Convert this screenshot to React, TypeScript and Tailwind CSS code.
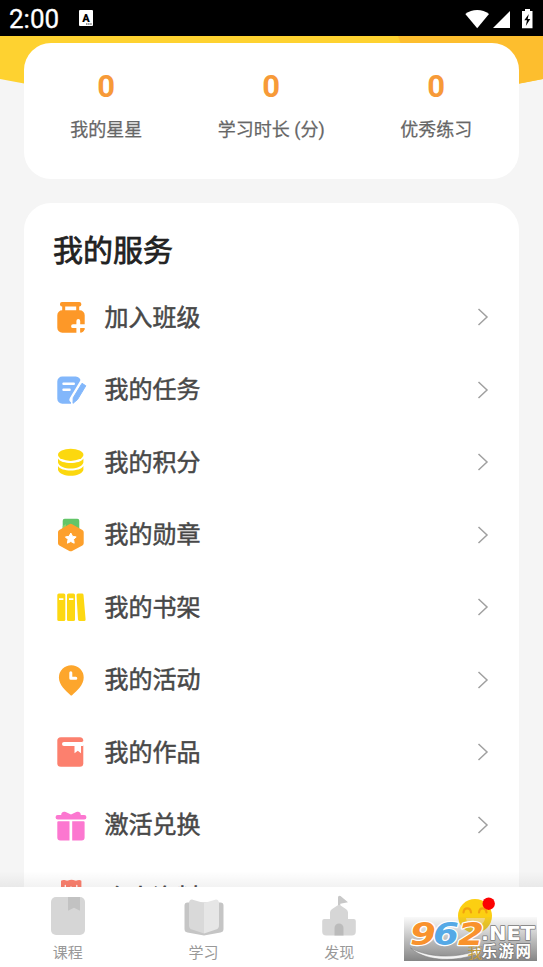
import type { ReactNode } from "react";

const stats = [
  { value: "0", label: "我的星星" },
  { value: "0", label: "学习时长 (分)" },
  { value: "0", label: "优秀练习" },
];

function Icon({ children }: { children: ReactNode }) {
  return (
    <svg viewBox="0 0 32 32" className="h-8 w-8 shrink-0 overflow-visible">
      {children}
    </svg>
  );
}

const services: { label: string; icon: ReactNode }[] = [
  {
    label: "加入班级",
    icon: (
      <Icon>
        <rect x="5" y="1" width="21.3" height="4.4" rx="2" fill="#fd9828" />
        <path d="M8.7 4v7M22.7 4v7" stroke="#fd9828" strokeWidth="3" />
        <path d="M7.3 9.3H24.7a5 5 0 0 1 5 5V26.7a5 5 0 0 1-5 5H7.3a5 5 0 0 1-5-5V14.3a5 5 0 0 1 5-5Z" fill="#fd9828" />
        <path d="M23.3 20V33M18 25.2H31" stroke="#fff" strokeWidth="3.8" strokeLinecap="round" />
        <path d="M25.6 27.4H29.7a5 5 0 0 1-4.1 4.2Z" fill="#fd9828" />
      </Icon>
    ),
  },
  {
    label: "我的任务",
    icon: (
      <Icon>
        <path d="M7.3 2.5H20.5a5 5 0 0 1 5.2 5.3L16 24.8V29.8H7.3a5 5 0 0 1-5-5V7.5a5 5 0 0 1 5-5Z" fill="#82b7fb" />
        <path d="M28.2 8.5 18 25.5" stroke="#fff" strokeWidth="7" strokeLinecap="round" />
        <path d="M27 9.3 30.8 11.8 22.5 25.6 18 29.3 18.2 23.8Z" fill="#82b7fb" stroke="#82b7fb" strokeLinejoin="round" />
        <path d="M8.5 9.8H18.8M8.5 15.8H14.6" stroke="#fff" strokeWidth="2.4" strokeLinecap="round" />
      </Icon>
    ),
  },
  {
    label: "我的积分",
    icon: (
      <Icon>
        <ellipse cx="15.7" cy="8.8" rx="12.7" ry="6.1" fill="#fcd80e" />
        <path d="M3 12.5C6 18.5 25.4 18.5 28.4 12.5V16.4C26 24.5 5.4 24.5 3 16.4Z" fill="#fcd80e" />
        <path d="M3 20C6 26 25.4 26 28.4 20V24C26 31.7 5.4 31.7 3 24Z" fill="#fcd80e" />
      </Icon>
    ),
  },
  {
    label: "我的勋章",
    icon: (
      <Icon>
        <path d="M9.7-.3H22.3a2 2 0 0 1 2 2V11H7.7V1.7a2 2 0 0 1 2-2Z" fill="#62c568" />
        <path d="M11 9V5L7.7 7V11Z" fill="#8bd36a" />
        <path d="M14.3 5.2a3 3 0 0 1 2.8 0L27.4 11a2.5 2.5 0 0 1 1.3 2.3V24.2a2.5 2.5 0 0 1-1.3 2.2L17.1 32a3 3 0 0 1-2.8 0L4.3 26.4A2.5 2.5 0 0 1 3 24.2V13.3A2.5 2.5 0 0 1 4.3 11Z" fill="#fda02c" />
        <path d="m15.8 14 1.7 3.3 3.7.6-2.6 2.6.6 3.7-3.4-1.7-3.4 1.7.6-3.7-2.6-2.6 3.7-.6Z" fill="#fff" stroke="#fff" strokeLinejoin="round" />
      </Icon>
    ),
  },
  {
    label: "我的书架",
    icon: (
      <Icon>
        <rect x="2.3" y="2.5" width="8" height="27.5" rx="1.5" fill="#fdd812" />
        <rect x="12" y="2.5" width="8" height="27.5" rx="1.5" fill="#fdd812" />
        <path d="M23 2.5H27a1.5 1.5 0 0 1 1.5 1.2L30.6 28.4A1.5 1.5 0 0 1 29.1 30H24.5A1.5 1.5 0 0 1 23 28.6L21.5 4A1.5 1.5 0 0 1 23 2.5Z" fill="#fdd812" />
        <path d="M4 8.2H8.4M14 8.2H18.4" stroke="#fff" strokeWidth="1.7" />
      </Icon>
    ),
  },
  {
    label: "我的活动",
    icon: (
      <Icon>
        <path d="M16.3 1.2A12.4 12.4 0 0 1 28.7 13.6C28.7 21 22 26.8 17.3 31a1.4 1.4 0 0 1-2 0C10.7 26.8 3.9 21 3.9 13.6A12.4 12.4 0 0 1 16.3 1.2Z" fill="#fda62c" />
        <path d="M15.8 8.7V14.2H20.8" fill="none" stroke="#fff" strokeWidth="3" strokeLinecap="round" strokeLinejoin="round" />
      </Icon>
    ),
  },
  {
    label: "我的作品",
    icon: (
      <Icon>
        <rect x="2.3" y="1.3" width="26" height="29.4" rx="3.5" fill="#fc806e" />
        <path d="M9 6H27a2 2 0 0 1 1.5 1V10H26V17.2L22.8 14.8 19.5 17.2V10H9a2 2 0 0 1 0-4Z" fill="#fff" />
        <path d="M28.3 5.2V9" stroke="#fff" strokeWidth="1.5" />
      </Icon>
    ),
  },
  {
    label: "激活兑换",
    icon: (
      <Icon>
        <path d="M2.8 6H6.2C6 3.5 8.3 1.8 10.7 3.1L16 5.5 21.3 3.1C23.7 1.8 26 3.5 25.8 6H29.2a2 2 0 0 1 0 4.5H2.8a2 2 0 0 1 0-4.5Z" fill="#fc77d0" />
        <path d="M3.3 12.2H14.5V31.5H5.3a3 3 0 0 1-3-3V13.2a1 1 0 0 1 1-1ZM17.2 12.2H28.6a1 1 0 0 1 1 1V28.5a3 3 0 0 1-3 3H17.2Z" fill="#fc77d0" />
      </Icon>
    ),
  },
  {
    label: "个人资料",
    icon: (
      <Icon>
        <path d="M6-.2C9-2 11 .3 13-.4 15-1.4 18-1.4 20-.4 22 .3 24-2 26.4-.2V25H6Z" fill="#fc806e" />
        <path d="M10.3 4.5V7M16 6V7M21.8 4.5V7" stroke="#fff" strokeWidth="1.3" strokeLinecap="round" />
      </Icon>
    ),
  },
];

const tabs: { label: string; icon: ReactNode; active?: boolean }[] = [
  {
    label: "课程",
    icon: (
      <>
        <rect x="3" y="3" width="34" height="38" rx="5" fill="#d6d6d6" />
        <path d="M20 3H32V16.8L26 13.8 20 16.8Z" fill="#c2c2c2" />
      </>
    ),
  },
  {
    label: "学习",
    icon: (
      <>
        <path d="M3.5 8.5H36.5a3 3 0 0 1 3 3V35a3.5 3.5 0 0 1-3 3.5L20 41.5 3.5 38.5a3.5 3.5 0 0 1-3-3.5V11.5a3 3 0 0 1 3-3Z" fill="#c5c5c5" />
        <path d="M8.7 5.7 20 9V39.6L8 35.5A4.5 4.5 0 0 1 5 31.2V9C5 7 6.7 5 8.7 5.7Z" fill="#d9d9d9" />
        <path d="M31.3 5.7 20 9V39.6L32 35.5A4.5 4.5 0 0 0 35 31.2V9C35 7 33.3 5 31.3 5.7Z" fill="#e6e6e6" />
      </>
    ),
  },
  {
    label: "发现",
    icon: (
      <>
        <path d="M19 13V3.5a1.7 1.7 0 0 1 2.5-1.5L29 8.2 21.3 9.8V13Z" fill="#c8c8c8" />
        <path d="M11 27V18.5a4 4 0 0 1 1.8-3.3L18 11.8a3.5 3.5 0 0 1 4 0L27.2 15.2a4 4 0 0 1 1.8 3.3V27Z" fill="#d6d6d6" />
        <path d="M5.2 25H34.8a2 2 0 0 1 2 2V37.5a4 4 0 0 1-4 4H7.2a4 4 0 0 1-4-4V27a2 2 0 0 1 2-2Z" fill="#d6d6d6" />
        <path d="M15.5 41.5V34a4.5 4.5 0 0 1 9 0V41.5Z" fill="#bbb" />
      </>
    ),
  },
  {
    label: "我",
    active: true,
    icon: (
      <>
        <circle cx="20" cy="22" r="17" fill="#fccf12" />
        <path d="M8.5 18.5C9 13 15.5 13 16 18.5M24 18.5C24.5 13 31 13 31.5 18.5" fill="none" stroke="#f1a10f" strokeWidth="2.2" strokeLinecap="round" />
        <path d="M11 24H30C29 35 12 35 11 24Z" fill="#fbdc7c" />
        <circle cx="33.7" cy="9.7" r="6.2" fill="#fc0202" />
      </>
    ),
  },
];

function StatusBar() {
  return (
    <header className="flex h-9 shrink-0 items-center bg-black pl-[9px] pr-1.5">
      <span className="pt-0.5 font-[Roboto] text-[26px] leading-[34px] text-white [-webkit-text-stroke:0.3px_#fff]">2:00</span>
      <svg viewBox="0 0 14 16" className="ml-5 h-4 w-3.5">
        <rect width="14" height="16" rx="1" fill="#fff" />
        <text x="7" y="11.5" textAnchor="middle" fontSize="11" fontWeight="900" fontFamily="Roboto">A</text>
        <path d="M7 14H13" stroke="#333" strokeDasharray="1.5 .6" />
      </svg>
      <svg viewBox="465 7 72 21" className="ml-auto h-[21px] w-[72px]" fill="#fff">
        <path d="M465.3 13C472 7.7 482.5 7.7 489 13L477.2 27.3Z" />
        <path d="M510 10V27H493Z" />
        <path d="M525 8H530V10H532.5V27.3H522V10H525Z" />
        <path d="M528.8 13 524.3 19.3H527L525.8 25 530.3 18H527.7Z" fill="#000" />
      </svg>
    </header>
  );
}

function Watermark() {
  return (
    <svg viewBox="404 917 133 44" className="absolute left-[404px] top-[917px] h-11 w-[133px]">
      <defs>
        <linearGradient id="shade" x1="0" y1="0" x2="0" y2="1">
          <stop offset="0" stopColor="#888" stopOpacity="0.05" />
          <stop offset=".5" stopColor="#808080" stopOpacity=".5" />
          <stop offset="1" stopColor="#747474" stopOpacity=".88" />
        </linearGradient>
      </defs>
      <rect x="404" y="917" width="133" height="44" fill="url(#shade)" />
      <path d="M410.5 948C427 957 452 959 474 951.5L471.5 949.5 482 946.5 477.5 957 475.5 954.5C450 963 424 960 410.5 948Z" fill="#f4f4f4" stroke="#777" strokeWidth=".5" />
      <text x="467.5" y="958" fontSize="15" fontFamily="Noto Sans CJK SC, sans-serif" fill="#c29a3c">我</text>
      <g fontFamily="DejaVu Sans" fontWeight="700" fontStyle="italic" fontSize="32.5" stroke="#fff" strokeWidth="2.4" strokeLinejoin="round" style={{ paintOrder: "stroke" }}>
        <text x="410" y="945" textLength="26" lengthAdjust="spacingAndGlyphs" fill="#f9922d">9</text>
        <text x="433" y="945" textLength="26" lengthAdjust="spacingAndGlyphs" fill="#55a9e6">6</text>
        <text x="458" y="945" textLength="26" lengthAdjust="spacingAndGlyphs" fill="#f9922d">2</text>
      </g>
      <g fill="#fff" stroke="#777" strokeWidth="1.4" strokeLinejoin="round" style={{ paintOrder: "stroke" }} fontWeight="700">
        <text x="481" y="940" fontSize="20" fontFamily="DejaVu Sans" textLength="54" lengthAdjust="spacingAndGlyphs">.NET</text>
        <text x="481.5" y="956.7" fontSize="15.5" fontFamily="Noto Sans CJK SC, sans-serif" textLength="49.5">乐游网</text>
      </g>
    </svg>
  );
}

export default function App() {
  return (
    <div className="relative flex h-[967px] w-[543px] flex-col overflow-hidden bg-[#f5f5f5] font-['Roboto','Noto_Sans_CJK_SC',sans-serif]">
      <StatusBar />
      <main className="relative h-[851px] shrink-0 overflow-hidden px-6 pt-[7px]">
        <svg viewBox="0 0 543 66" className="absolute left-0 top-0 h-[66px] w-[543px]">
          <path d="M0 0H543V43C380 76 163 76 0 43Z" fill="#fed230" />
          <path d="M398 0H543V43C500 52 460 58 420 62Z" fill="#fdbe2e" />
        </svg>
        <section className="relative grid h-[136px] grid-cols-3 rounded-[27px] bg-white pt-[25px] text-center">
          {stats.map((s) => (
            <div key={s.label} className="pr-[0.6px]">
              <div className="text-[31px] font-bold leading-[38px] text-[#f79a38]">{s.value}</div>
              <div className="mt-2.5 text-[18px] leading-7 text-[#666] [-webkit-text-stroke:0.25px_#666]">{s.label}</div>
            </div>
          ))}
        </section>
        <section className="relative mt-6 h-[760px] rounded-[27px] bg-white pl-[31px] pr-[30px] pt-[25px]">
          <h1 className="-ml-0.5 text-[30px] leading-[46px] text-[#222] [-webkit-text-stroke:0.75px_#222]">我的服务</h1>
          <ul className="mt-[6.75px]">
            {services.map((s) => (
              <li key={s.label} className="flex h-[72.5px] items-center">
                {s.icon}
                <span className="ml-[17.5px] pt-px text-[24px] leading-9 text-[#484848] [-webkit-text-stroke:0.5px_#484848]">{s.label}</span>
                <svg viewBox="0 0 12 18" className="ml-auto h-[18px] w-3" fill="none" stroke="#a0a0a0" strokeWidth="1.5">
                  <path d="M1.5 1 10 9 1.5 17" />
                </svg>
              </li>
            ))}
          </ul>
        </section>
        <div className="absolute inset-x-0 bottom-0 h-4 bg-linear-to-b from-transparent to-black/5" />
      </main>
      <nav className="grid h-20 shrink-0 grid-cols-4 bg-white">
        {tabs.map((t) => (
          <div key={t.label} className="flex flex-col items-center pt-[7px]">
            <svg viewBox="0 0 40 44" className="h-11 w-10">{t.icon}</svg>
            {!t.active && <span className="mt-1 text-[15px] leading-[22px] text-[#999]">{t.label}</span>}
          </div>
        ))}
      </nav>
      <Watermark />
    </div>
  );
}
